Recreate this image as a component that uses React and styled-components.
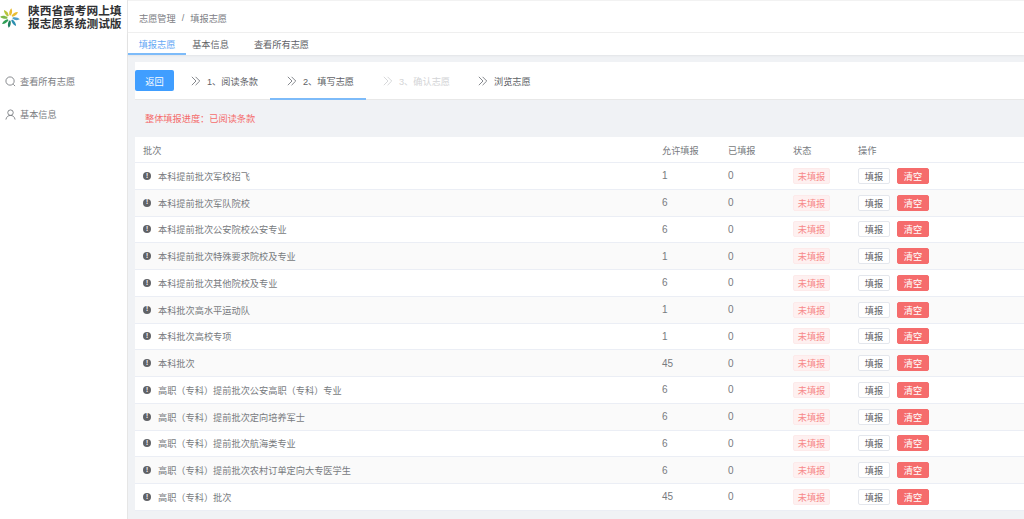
import React from 'react';
import styled, { createGlobalStyle } from 'styled-components';

const GlobalStyle = createGlobalStyle`
  html, body { margin: 0; padding: 0; background: #fff; }
  body { font-family: "Liberation Sans", "Noto Sans CJK SC", sans-serif; overflow: hidden; }
`;

const Page = styled.div`
  display: flex;
  width: 1024px;
  height: 519px;
  overflow: hidden;
`;

const Sidebar = styled.aside`
  width: 128px;
  flex: none;
  box-sizing: border-box;
  border-right: 1px solid #e6e6e6;
  background: #fff;
`;

const Brand = styled.div`
  display: flex;
  align-items: center;
  gap: 8px;
  height: 36px;
`;

const BrandTitle = styled.div`
  font-size: 11.7px;
  line-height: 12.8px;
  font-weight: 700;
  color: #303133;
  width: 98px;
`;

const SideMenu = styled.nav`
  display: flex;
  flex-direction: column;
  gap: 19px;
  padding: 38px 0 0 5px;
`;

const SideItem = styled.div`
  display: flex;
  align-items: center;
  gap: 4px;
  height: 14px;
  font-size: 9.2px;
  color: #7a7d82;
`;

const Main = styled.main`
  flex: 1;
  min-width: 0;
  display: flex;
  flex-direction: column;
  background: #f0f2f5;
`;

const Crumbs = styled.div`
  display: flex;
  align-items: center;
  gap: 6px;
  height: 33px;
  padding: 2px 0 0 11px;
  background: #fff;
  border-top: 1px solid #f2f2f2;
  border-bottom: 1px solid #f0f0f0;
  box-sizing: border-box;
  font-size: 9.2px;
  color: #7d8085;
`;

const TabBar = styled.div`
  display: flex;
  height: 22px;
  background: #fff;
  box-shadow: 0 1px 2px rgba(0, 0, 0, 0.06);
`;

const Tab = styled.div`
  display: flex;
  align-items: center;
  justify-content: center;
  width: ${props => props.$w}px;
  font-size: 9.2px;
  color: ${props => props.$active ? '#66a9f5' : '#606266'};
  box-shadow: ${props => props.$active ? 'inset 0 -2px 0 #7dbbf9' : 'none'};
`;

const Content = styled.div`
  padding: 7px 0 0 7px;
`;

const Steps = styled.div`
  display: flex;
  align-items: center;
  height: 38px;
  background: #fff;
  border-bottom: 1px solid #e8e8e8;
  box-sizing: border-box;
`;

const BackButton = styled.button`
  width: 39px;
  height: 21px;
  margin-right: 7px;
  padding: 0;
  border: none;
  border-radius: 2px;
  background: #409eff;
  color: #fff;
  font: inherit;
  font-size: 9.2px;
`;

const Step = styled.div`
  position: relative;
  display: flex;
  align-items: center;
  gap: 6px;
  width: ${props => props.$w}px;
  height: 100%;
  padding-left: ${props => props.$pad}px;
  box-sizing: border-box;
  font-size: 9.2px;
  color: ${props => props.$disabled ? '#d3d4d6' : '#606266'};
  ${props => props.$active && `
    &::after {
      content: '';
      position: absolute;
      left: 0;
      right: 0;
      bottom: -1px;
      height: 2px;
      background: #7dbbf9;
    }
  `}
`;

const Progress = styled.div`
  height: 37px;
  padding: 0 0 2px 10px;
  box-sizing: border-box;
  display: flex;
  align-items: center;
  font-size: 9.2px;
  color: #f56c6c;
`;

const Table = styled.div`
  background: #fff;
`;

const Row = styled.div`
  display: grid;
  grid-template-columns: 519px 66px 65px 65px 1fr;
  align-items: center;
  height: ${props => props.$head ? 26 : 26.75}px;
  box-sizing: border-box;
  padding-left: 8px;
  font-size: 9.2px;
  color: #787b80;
  background: ${props => props.$striped ? '#fafafa' : '#fff'};
  border-bottom: 1px solid #ebeef5;
`;

const NameCell = styled.div`
  display: flex;
  align-items: center;
  gap: 7px;
`;

const Num = styled.div`
  font-size: 10px;
`;

const Info = styled.span`
  display: flex;
  align-items: center;
  justify-content: center;
  width: 8px;
  height: 8px;
  border-radius: 50%;
  background: #606266;
  color: #fff;
  font-size: 6.5px;
  font-weight: 700;
  line-height: 1;
`;

const Tag = styled.span`
  display: flex;
  align-items: center;
  justify-content: center;
  width: 37px;
  height: 16px;
  box-sizing: border-box;
  border: 1px solid #fdeaea;
  border-radius: 2px;
  background: #fef0f0;
  color: #f78989;
`;

const Actions = styled.div`
  display: flex;
  gap: 7px;
`;

const ActionButton = styled.button`
  width: 32px;
  height: 16px;
  padding: 0;
  box-sizing: border-box;
  border: 1px solid ${props => props.$danger ? '#f56c6c' : '#e4e7ed'};
  border-radius: 2px;
  background: ${props => props.$danger ? '#f56c6c' : '#fff'};
  color: ${props => props.$danger ? '#fff' : '#606266'};
  font: inherit;
  font-size: 9.2px;
`;

const batches = [
  ['本科提前批次军校招飞', 1],
  ['本科提前批次军队院校', 6],
  ['本科提前批次公安院校公安专业', 6],
  ['本科提前批次特殊要求院校及专业', 1],
  ['本科提前批次其他院校及专业', 6],
  ['本科批次高水平运动队', 1],
  ['本科批次高校专项', 1],
  ['本科批次', 45],
  ['高职（专科）提前批次公安高职（专科）专业', 6],
  ['高职（专科）提前批次定向培养军士', 6],
  ['高职（专科）提前批次航海类专业', 6],
  ['高职（专科）提前批次农村订单定向大专医学生', 6],
  ['高职（专科）批次', 45],
];

const Logo = () => {
  const colors = ['#e9bd34', '#e9bd34', '#4f9fc9', '#2c8fb0', '#1f7f5f', '#2f9e55', '#7cb84a', '#b6c43c'];
  return (
    <svg width="20" height="20" viewBox="-12 -12 24 24" style={{ flex: 'none' }}>
      {colors.map((c, i) => (
        <path
          key={i}
          d="M0.9 -3 C2.4 -5.4 3.4 -8.6 1.6 -11.8 C-0.6 -10 -1.4 -6.4 -0.7 -3.2 Z"
          fill={c}
          transform={`rotate(${i * 45})`}
        />
      ))}
    </svg>
  );
};

const Chevrons = ({ color }) => (
  <svg width="10" height="10" viewBox="0 0 12 12" fill="none" stroke={color} strokeWidth="1.1">
    <path d="M1 1 L6 6 L1 11" />
    <path d="M5.5 1 L10.5 6 L5.5 11" />
  </svg>
);

const SearchIcon = () => (
  <svg width="11" height="11" viewBox="0 0 12 12" fill="none" stroke="#6f7277" strokeWidth="0.9">
    <circle cx="5.5" cy="5.5" r="4.5" />
    <path d="M9 9 L11 11" />
  </svg>
);

const UserIcon = () => (
  <svg width="11" height="11" viewBox="0 0 12 12" fill="none" stroke="#6f7277" strokeWidth="0.9">
    <circle cx="6" cy="4" r="3" />
    <path d="M1 11.5 C1.5 8.5 3.5 7 6 7 C8.5 7 10.5 8.5 11 11.5" />
  </svg>
);

export default function App() {
  return (
    <Page>
      <GlobalStyle />
      <Sidebar>
        <Brand>
          <Logo />
          <BrandTitle>陕西省高考网上填报志愿系统测试版</BrandTitle>
        </Brand>
        <SideMenu>
          <SideItem><SearchIcon />查看所有志愿</SideItem>
          <SideItem><UserIcon />基本信息</SideItem>
        </SideMenu>
      </Sidebar>
      <Main>
        <Crumbs>
          <span>志愿管理</span>
          <span>/</span>
          <span>填报志愿</span>
        </Crumbs>
        <TabBar>
          <Tab $w={58} $active>填报志愿</Tab>
          <Tab $w={49}>基本信息</Tab>
          <Tab $w={93}>查看所有志愿</Tab>
        </TabBar>
        <Content>
          <Steps>
            <BackButton>返回</BackButton>
            <Step $w={89} $pad={10}><Chevrons color="#7a7d82" />1、阅读条款</Step>
            <Step $w={96} $pad={17} $active><Chevrons color="#7a7d82" />2、填写志愿</Step>
            <Step $w={95} $pad={17} $disabled><Chevrons color="#d3d4d6" />3、确认志愿</Step>
            <Step $w={100} $pad={17}><Chevrons color="#7a7d82" />浏览志愿</Step>
          </Steps>
          <Progress>整体填报进度：已阅读条款</Progress>
          <Table>
            <Row $head>
              <div>批次</div>
              <div>允许填报</div>
              <div>已填报</div>
              <div>状态</div>
              <div>操作</div>
            </Row>
            {batches.map(([name, allowed], i) => (
              <Row key={name} $striped={i % 2 === 1}>
                <NameCell><Info>!</Info>{name}</NameCell>
                <Num>{allowed}</Num>
                <Num>0</Num>
                <div><Tag>未填报</Tag></div>
                <Actions>
                  <ActionButton>填报</ActionButton>
                  <ActionButton $danger>清空</ActionButton>
                </Actions>
              </Row>
            ))}
          </Table>
        </Content>
      </Main>
    </Page>
  );
}
